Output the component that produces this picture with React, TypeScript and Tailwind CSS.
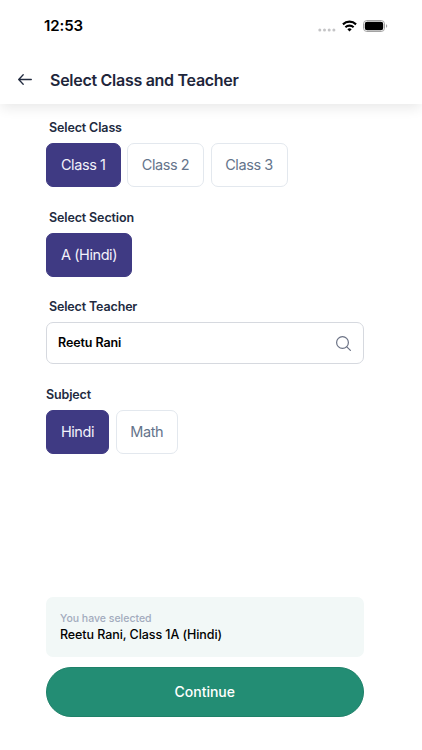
import { useState } from "react";
import clsx from "clsx";

const classes = [
  { name: "Class 1", width: "w-[74.5px]" },
  { name: "Class 2", width: "w-[77px]" },
  { name: "Class 3", width: "w-[77px]" },
];
const sections = [{ name: "A (Hindi)", width: "w-[86px]" }];
const subjects = [
  { name: "Hindi", width: "w-[63px]" },
  { name: "Math", width: "w-[62.5px]" },
];

type Option = { name: string; width: string };

const StatusBar = () => (
  <div className="flex h-[52px] items-center justify-between pl-[44px] pr-[34px]">
    <span className="text-[15px] font-semibold leading-5 tracking-[-0.1px] text-black">12:53</span>
    <div className="flex items-center">
      <svg width="18" height="4" viewBox="0 0 18 4" fill="#c4c4c6" className="mr-[6px] mt-[8px]">
        <circle cx="1.8" cy="2" r="1.5" />
        <circle cx="6.5" cy="2" r="1.5" />
        <circle cx="11.2" cy="2" r="1.5" />
        <circle cx="15.9" cy="2" r="1.5" />
      </svg>
      <svg width="15" height="12" viewBox="0 0 16 12" preserveAspectRatio="none" fill="none" stroke="#000" className="mr-[6.5px]">
        <path d="M1 4.4a10.2 10.2 0 0 1 14 0" strokeWidth="2.2" />
        <path d="M3.6 7.3a6.4 6.4 0 0 1 8.8 0" strokeWidth="2.2" />
        <path d="M8 11.6 5.7 9.3a3.3 3.3 0 0 1 4.6 0z" fill="#000" stroke="none" />
      </svg>
      <svg width="25" height="12" viewBox="0 0 25 12" fill="none">
        <rect x="0.5" y="0.5" width="21" height="11" rx="3.4" stroke="#a3a3a3" />
        <rect x="1.8" y="1.8" width="18.4" height="8.4" rx="2.3" fill="#000" />
        <path d="M23 4.2v3.6c.8-.3 1.2-1 1.2-1.8S23.8 4.5 23 4.2z" fill="#a3a3a3" />
      </svg>
    </div>
  </div>
);

const OptionGroup = ({
  label,
  options,
  selected,
  onSelect,
  labelClass,
}: {
  label: string;
  options: Option[];
  selected: string;
  onSelect: (name: string) => void;
  labelClass?: string;
}) => (
  <div>
    <h2 className={clsx("text-[12.5px] font-semibold leading-4 tracking-[-0.13px] text-[#222b3f]", labelClass)}>{label}</h2>
    <div className="mt-[6.5px] flex gap-[6.5px]">
      {options.map((option) => (
        <button
          key={option.name}
          onClick={() => onSelect(option.name)}
          className={clsx(
            "h-11 shrink-0 whitespace-nowrap rounded-[7px] border pt-px text-[14.5px] tracking-[-0.42px]",
            option.width,
            selected === option.name
              ? "border-[#3f3a83] bg-[#3f3a83] text-[#f3f2fa]"
              : "border-[#e3e8ee] bg-white text-[#64748b]"
          )}
        >
          {option.name}
        </button>
      ))}
    </div>
  </div>
);

const App = () => {
  const [selectedClass, setSelectedClass] = useState("Class 1");
  const [section, setSection] = useState("A (Hindi)");
  const [subject, setSubject] = useState("Hindi");
  const [teacher, setTeacher] = useState("Reetu Rani");

  return (
    <div className="flex h-[750px] w-[422px] flex-col overflow-hidden bg-white font-['Inter',sans-serif]">
      <header className="h-[104px] shrink-0 bg-white shadow-[0_5px_12px_-1px_rgba(0,0,0,0.09)]">
        <StatusBar />
        <div className="flex h-[54px] items-center pl-[18px]">
          <button aria-label="Back">
            <svg width="14" height="12" viewBox="0 0 14 12" fill="none" stroke="#222b3f" strokeWidth="1.3" strokeLinecap="round" strokeLinejoin="round">
              <path d="M13.3 6.5H.8M5.2 1.8.7 6.5l4.5 4.7" />
            </svg>
          </button>
          <h1 className="ml-[18px] mt-px text-base font-semibold tracking-[-0.28px] text-[#1e263b]">Select Class and Teacher</h1>
        </div>
      </header>

      <main className="flex flex-1 flex-col pl-[46px] pr-[58.5px] pt-[16px]">
        <OptionGroup label="Select Class" options={classes} selected={selectedClass} onSelect={setSelectedClass} labelClass="pl-[3px]" />
        <div className="mt-[23.5px]">
          <OptionGroup label="Select Section" options={sections} selected={section} onSelect={setSection} labelClass="pl-[3px]" />
        </div>

        <div className="mt-[22.5px]">
          <h2 className="pl-[3px] text-[12.5px] font-semibold leading-4 tracking-[-0.15px] text-[#222b3f]">Select Teacher</h2>
          <div className="mt-[7px] flex h-[42px] items-center rounded-[7px] border border-[#d6d9df] pl-[11px] pr-[12px]">
            <input
              type="text"
              value={teacher}
              onChange={(e) => setTeacher(e.target.value)}
              className="min-w-0 flex-1 text-[12.5px] font-semibold tracking-[-0.1px] text-black outline-none"
            />
            <svg width="15" height="15" viewBox="0 0 15 15" fill="none" stroke="#6b7285" strokeWidth="1.2" strokeLinecap="round">
              <circle cx="6.5" cy="6.5" r="5.9" />
              <path d="m10.8 10.8 3.6 3.6" />
            </svg>
          </div>
        </div>

        <div className="mt-[23px]">
          <OptionGroup label="Subject" options={subjects} selected={subject} onSelect={setSubject} />
        </div>

        <div className="mb-[33px] mt-auto">
          <div className="h-[60px] rounded-[7px] bg-[#f2f8f7] pl-[14px] pt-[15px]">
            <p className="text-[10.5px] font-medium leading-[14px] text-[#a2abbd]">You have selected</p>
            <p className="text-[12.5px] font-medium leading-[18px] tracking-[-0.08px] text-black">Reetu Rani, Class 1A (Hindi)</p>
          </div>
          <button className="mt-[10px] h-[50px] w-full rounded-full border border-[#1f8169] bg-[#238d74] text-sm font-medium text-white">
            Continue
          </button>
        </div>
      </main>
    </div>
  );
};

export default App;
